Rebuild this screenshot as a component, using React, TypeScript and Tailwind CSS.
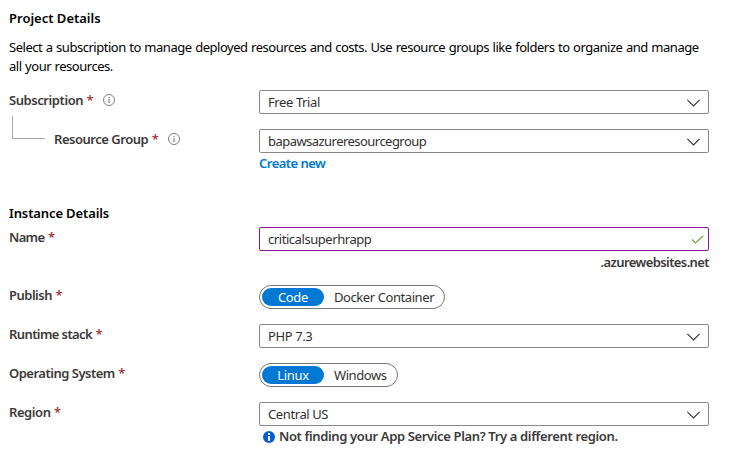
import React from "react";

const Info = () => (
  <svg width="12" height="12" viewBox="0 0 12 12" fill="none" stroke="#707070" className="shrink-0">
    <circle cx="6" cy="6" r="5.5" strokeWidth=".9" />
    <path d="M6 5v4M6 3v1" strokeWidth="1.1" />
  </svg>
);

const Chevron = () => (
  <svg width="13" height="8" viewBox="0 0 13 8" fill="none" stroke="#323130" strokeWidth="1.1" className="mt-[2px] shrink-0">
    <path d="M.4.8 6.5 6.9 12.6.8" />
  </svg>
);

const Label = ({ text, info = false, spacing = "tracking-[-0.43px]" }: { text: string; info?: boolean; spacing?: string }) => (
  <div className="mt-px flex h-[18px] items-center font-semibold text-[#3b3a39]">
    <span className={spacing}>{text}</span>
    <span className="ml-[3.5px] font-medium text-[#a4262c]">*</span>
    {info && <span className="ml-[9px]"><Info /></span>}
  </div>
);

const Select = ({ value, spacing = "tracking-[-0.4px]" }: { value: string; spacing?: string }) => (
  <div className="flex h-6 w-[450px] items-center justify-between rounded-[2px] border border-[#8a8886] pl-2 pr-[8px] text-[#323130]">
    <span className={spacing}>{value}</span>
    <Chevron />
  </div>
);

const Toggle = ({ on, off }: { on: string; off: string }) => (
  <div className="flex h-6 w-fit items-center rounded-full border border-[#797775] p-[2px] pr-[10px] tracking-[-0.42px] text-[#323130]">
    <span className="flex h-[18px] w-[62px] items-center justify-center rounded-full bg-[#0078d4] tracking-[-0.3px] text-white">{on}</span>
    <span className="ml-[10px]">{off}</span>
  </div>
);

export default function App() {
  return (
    <main className="h-[465px] w-[731px] overflow-hidden bg-white pl-[9px] pt-[9px] font-['Noto_Sans',sans-serif] text-[13px] leading-[18px] text-black">
      <h2 className="font-semibold">Project Details</h2>
      <p className="mt-[11px] whitespace-nowrap leading-[19px] tracking-[-0.475px] [word-spacing:0.6px]">Select a subscription to manage deployed resources and costs. Use resource groups like folders to organize and manage<br />all your resources.</p>
      <div className="mt-[14px] grid grid-cols-[250px_450px]">
        <Label text="Subscription" info />
        <Select value="Free Trial" />
      </div>
      <div className="mt-[15px] grid grid-cols-[250px_450px]">
        <div className="flex">
          <div className="ml-[3px] mr-[9px] -mt-[13px] h-[23px] w-[33px] border-b border-l border-[#a6a6a6]" />
          <Label text="Resource Group" info spacing="tracking-[-0.47px]" />
        </div>
        <div>
          <Select value="bapawsazureresourcegroup" spacing="tracking-[-0.54px]" />
          <div className="mt-[1px] font-semibold tracking-[-0.52px] text-[#0078d4]">Create new</div>
        </div>
      </div>
      <h2 className="mt-8 font-semibold tracking-[-0.12px]">Instance Details</h2>
      <div className="mt-[5px] grid grid-cols-[250px_450px]">
        <Label text="Name" spacing="tracking-[-0.65px]" />
        <div>
          <div className="flex h-6 items-center justify-between rounded-[2px] border border-[#881798] pl-2 pr-1 tracking-[-0.44px] text-[#323130]">
            criticalsuperhrapp
            <svg width="13" height="9" viewBox="0 0 13 9" fill="none" stroke="#6bb13a" strokeWidth="1.2"><path d="m1 4.5 3.5 3.5 7.8-7.2" /></svg>
          </div>
          <div className="mt-[2px] text-right font-semibold tracking-[-0.6px] text-[#3b3a39]">.azurewebsites.net</div>
        </div>
      </div>
      <div className="mt-[14px] grid grid-cols-[250px_450px]"><Label text="Publish" spacing="tracking-[-0.5px]" /><Toggle on="Code" off="Docker Container" /></div>
      <div className="mt-[15px] grid grid-cols-[250px_450px]"><Label text="Runtime stack" spacing="tracking-[-0.6px]" /><Select value="PHP 7.3" /></div>
      <div className="mt-[15px] grid grid-cols-[250px_450px]"><Label text="Operating System" spacing="tracking-[-0.5px]" /><Toggle on="Linux" off="Windows" /></div>
      <div className="mt-[15px] grid grid-cols-[250px_450px]">
        <Label text="Region" />
        <div>
          <Select value="Central US" />
          <div className="mt-[1px] flex items-center whitespace-nowrap pl-1 font-semibold tracking-[-0.36px] text-[#3b3a39]">
            <svg width="12" height="12" viewBox="0 0 12 12" className="mr-1 mt-[2px]"><circle cx="6" cy="6" r="6" fill="#015cda" /><path d="M5 5h2v5H5zM5 2h2v2H5z" fill="white" /></svg>
            Not finding your App Service Plan? Try a different region.
          </div>
        </div>
      </div>
    </main>
  );
}
